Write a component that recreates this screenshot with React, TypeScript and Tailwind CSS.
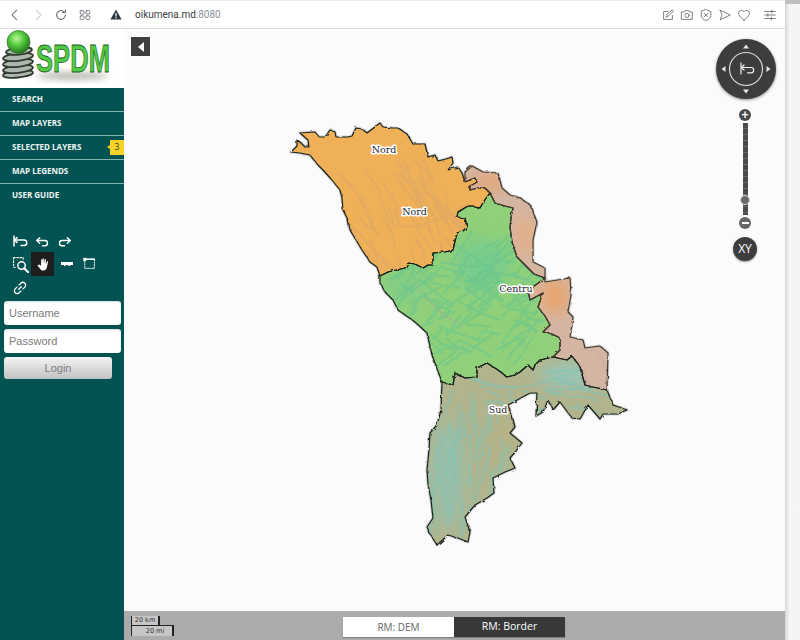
import React from "react";

const nordCentre = "380,276 388,272 405,268 408,263 415,264 423,268 428,265 433,265 433,253 445,252 453,250 455,241 457,233 463,231 467,227 465,218 457,217 458,212 468,206 474,206 480,208 484,201 490,193";
const centreEast = "490,193 495,203 505,206 513,208 511,218 510,227 512,242 517,257 522,262 530,270 534,274 545,278 537,284 528,290 530,300 543,293 538,307 545,316 550,325 543,332 552,334 560,338 560,350 553,357";
const centreSouth = "553,357 540,360 535,365 533,370 528,365 520,372 515,375 507,377 498,370 487,363 477,368 477,377 465,378 455,373 453,385 442,382";
const pts = (s: string) => s.trim().split(" ");
const rev = (s: string) => pts(s).reverse().join(" ");

const nord = `291,152 297,146 297,140 301,143 305,147 309,147 308,140 300,133 315,132 319,137 325,137 330,130 335,132 336,137 348,137 352,136 356,128 362,129 367,133 375,127 380,123 383,127 392,128 398,128 407,134 413,144 425,144 428,157 435,155 438,161 446,159 452,157 453,163 448,170 458,167 462,173 465,182 475,178 477,182 470,186 470,190 478,188 485,188 ${rev(nordCentre)} 377,267 370,262 362,250 350,230 348,220 343,210 342,198 340,190 332,180 323,170 318,165 310,155 300,153`;
const centre = `${nordCentre} ${pts(centreEast).slice(1).join(" ")} ${pts(centreSouth).slice(1).join(" ")} 432,355 427,333 415,322 398,310 393,300 385,292 380,283`;
const east = `465,172 472,166 483,172 498,173 502,188 510,195 520,198 530,205 537,222 533,240 533,262 545,268 545,282 570,278 571,295 568,312 573,317 570,337 583,340 585,348 600,346 608,353 607,390 593,387 585,385 580,367 572,356 567,360 553,357 ${rev(centreEast)} 485,188 478,188 470,190 470,186 477,182 475,178 465,182`;
const sud = `${rev(centreSouth)} 567,360 572,356 580,367 585,385 593,387 607,390 613,405 627,410 618,414 603,414 600,419 588,405 580,419 572,418 560,402 553,410 548,400 543,412 536,416 537,393 530,393 519,399 508,405 512,416 515,427 510,433 522,443 516,451 510,458 515,468 505,472 493,478 494,493 487,498 475,505 465,517 470,532 468,542 458,538 448,535 437,545 430,534 427,527 433,518 431,500 428,484 427,470 429,450 430,433 437,425 441,410`;

function makeStreams(seed: number, x0: number, y0: number, x1: number, y1: number, angle: number, n: number): string[] {
  let s = seed;
  const r = () => { s = (s * 16807) % 2147483647; return s / 2147483647; };
  const out: string[] = [];
  for (let i = 0; i < n; i++) {
    const x = x0 + r() * (x1 - x0);
    const y = y0 + r() * (y1 - y0);
    const a = angle + (r() - 0.5) * 0.6;
    const len = 14 + r() * 22;
    const mx = x + Math.cos(a) * len * 0.5 + (r() - 0.5) * 6;
    const my = y + Math.sin(a) * len * 0.5 + (r() - 0.5) * 6;
    const ex = x + Math.cos(a) * len;
    const ey = y + Math.sin(a) * len;
    out.push(`M${x.toFixed(1)} ${y.toFixed(1)}Q${mx.toFixed(1)} ${my.toFixed(1)} ${ex.toFixed(1)} ${ey.toFixed(1)}`);
  }
  return out;
}

const Region = ({ id, points, base, streams, streamColor, width = 2, opacity = 0.5, overlay }: { id: string; points: string; base: string; streams: string[]; streamColor: string; width?: number; opacity?: number; overlay?: React.ReactNode }) => (
  <g>
    <clipPath id={id}><polygon points={points} /></clipPath>
    <polygon points={points} fill={base} />
    <g clipPath={`url(#${id})`}>
      {overlay}
      <g filter="url(#soft)" stroke={streamColor} strokeWidth={width} fill="none" strokeLinecap="round" opacity={opacity}>
        {streams.map((d, i) => <path key={i} d={d} />)}
      </g>
    </g>
  </g>
);

const MoldovaMap = () => (
  <svg width="661" height="582" viewBox="124 29 661 582" className="block">
    <defs>
      <filter id="soft" x="-10%" y="-10%" width="120%" height="120%"><feGaussianBlur stdDeviation="0.7" /></filter>
      <filter id="blur6" x="-30%" y="-30%" width="160%" height="160%"><feGaussianBlur stdDeviation="8" /></filter>
      <filter id="rough" x="-5%" y="-5%" width="110%" height="110%">
        <feTurbulence type="fractalNoise" baseFrequency="0.2" numOctaves="2" seed="4" />
        <feDisplacementMap in="SourceGraphic" scale="3" />
      </filter>
    </defs>
    <g filter="url(#rough)">
      <g fill="none" stroke="#00000030" strokeWidth="3" strokeLinejoin="round">
        <polygon points={nord} /><polygon points={centre} /><polygon points={east} /><polygon points={sud} />
      </g>
      <Region id="rN" points={nord} base="#f0b059" streamColor="#d2a46c" opacity={0.4} streams={[
        ...makeStreams(77, 340, 160, 455, 255, 1.0, 60),
        "M470 202Q440 222 420 225T395 226", "M445 190Q452 210 436 222", "M400 170Q420 195 430 222", "M370 240Q375 252 378 262",
      ]} />
      <Region id="rC" points={centre} base="#90d07a" streamColor="#63c48f" width={2.2} opacity={0.5} overlay={<>
        <ellipse cx="482" cy="265" rx="26" ry="26" fill="#78cc8c" filter="url(#blur6)" />
        <ellipse cx="405" cy="288" rx="18" ry="14" fill="#80cc86" filter="url(#blur6)" />
        <g stroke="#a8a89c" strokeWidth="1.200" fill="none" filter="url(#soft)">
          <path d="M415 283L430 302 445 316 456 322" strokeDasharray="3 2" />
          <path d="M440 312L462 326" strokeDasharray="3 3" />
        </g>
      </>} streams={[
        ...makeStreams(31, 410, 225, 545, 350, 2.4, 90),
        ...makeStreams(91, 400, 260, 540, 345, 0.35, 40),
        "M455 245Q480 258 500 280T530 320", "M440 262Q475 270 500 262",
      ]} />
      <Region id="rE" points={east} base="#d4b5a3" streamColor="#c9ab98" overlay={<>
        <ellipse cx="490" cy="182" rx="20" ry="10" fill="#e3a77b" filter="url(#blur6)" />
        <ellipse cx="555" cy="296" rx="14" ry="18" fill="#e9a46a" filter="url(#blur6)" />
        <ellipse cx="525" cy="235" rx="8" ry="20" fill="#e6ae7f" filter="url(#blur6)" />
      </>} streams={makeStreams(13, 470, 170, 600, 380, 1.2, 8)} />
      <Region id="rS" points={sud} base="#b2b48d" streamColor="#80c4b6" width={2.2} opacity={0.55} overlay={<>
        <ellipse cx="448" cy="475" rx="16" ry="55" fill="#97c0aa" filter="url(#blur6)" />
        <ellipse cx="570" cy="375" rx="32" ry="12" fill="#98c6b8" filter="url(#blur6)" />
        <ellipse cx="500" cy="440" rx="9" ry="24" fill="#b9b284" filter="url(#blur6)" />
      </>} streams={[
        ...makeStreams(55, 430, 390, 510, 520, 1.6, 54),
        ...makeStreams(17, 470, 365, 610, 410, 0.2, 26),
        "M476 420Q480 470 476 510", "M470 375Q500 395 545 382T580 365", "M462 500Q465 525 462 540",
      ]} />
      <g fill="none" stroke="#18221a" strokeWidth="1.200" strokeLinejoin="round">
        <polygon points={nord} />
        <polygon points={centre} />
        <polygon points={east} stroke="#44392e" />
        <polygon points={sud} />
      </g>
    </g>
    <g fontFamily="'DejaVu Serif', serif" fontSize="9.5" fill="#26262e" textAnchor="middle" stroke="#ffffff" strokeWidth="3" strokeLinejoin="round" paintOrder="stroke">
      <text x="384" y="152.500">Nord</text>
      <text x="414.500" y="215">Nord</text>
      <text x="516" y="291.500">Centru</text>
      <text x="498" y="412.500">Sud</text>
    </g>
  </svg>
);

const Logo = () => (
  <div className="h-[59px] w-full bg-white">
    <svg width="124" height="59" viewBox="0 0 124 59" className="block">
      <defs>
        <radialGradient id="ball" cx="0.42" cy="0.35" r="0.7">
          <stop offset="0" stopColor="#b9f59a" />
          <stop offset="0.45" stopColor="#52c93c" />
          <stop offset="1" stopColor="#1d6b1a" />
        </radialGradient>
        <filter id="lg" x="-20%" y="-60%" width="140%" height="220%"><feGaussianBlur stdDeviation="3" /></filter>
      </defs>
      <ellipse cx="72" cy="47" rx="36" ry="4" fill="#bcbcb4" filter="url(#lg)" />
      <g fill="#aeb6ae" stroke="#2f3a2f" strokeWidth="1.800">
        <ellipse cx="18" cy="45" rx="15" ry="3.500" transform="rotate(-6 18 45)" />
        <ellipse cx="18" cy="40" rx="15" ry="3.800" transform="rotate(-6 18 40)" />
        <ellipse cx="18" cy="34" rx="15" ry="3.800" transform="rotate(-6 18 34)" />
        <ellipse cx="18" cy="28" rx="15" ry="3.800" transform="rotate(-6 18 28)" />
        <ellipse cx="19" cy="22" rx="13" ry="3.600" transform="rotate(-6 19 22)" />
      </g>
      <circle cx="18.500" cy="13" r="11.500" fill="url(#ball)" stroke="#2f6a2a" strokeWidth="0.6" />
      <text transform="translate(36 43) scale(0.674 1)" fontFamily="'Liberation Sans', sans-serif" fontSize="38" fontWeight="700" fill="#4fca42" stroke="#1d5c1d" strokeWidth="0.800">SPDM</text>
    </svg>
  </div>
);

const I = ({ children, size = 16, sw = 1.4, className = "" }: { children: React.ReactNode; size?: number; sw?: number; className?: string }) => (
  <svg width={size} height={size} viewBox="0 0 16 16" fill="none" stroke="currentColor" strokeWidth={sw} strokeLinecap="round" strokeLinejoin="round" className={className}>{children}</svg>
);

const BrowserBar = () => (
  <div className="flex h-[29px] w-full items-center border-b border-t border-b-[#d9dce0] border-t-[#ececec] bg-white text-[#6b6f75]">
    <div className="w-[8px]" />
    <I size={14} sw={1.200}><path d="M10 2.500 4.500 8l5.500 5.500" /></I>
    <div className="w-[9px]" />
    <I size={14} sw={1.200} className="text-[#c8cacd]"><path d="M6 2.500 11.500 8 6 13.500" /></I>
    <div className="w-[9px]" />
    <I size={14} sw={1.200}><path d="M13 8a5 5 0 1 1-1.600-3.700M13 2v3h-3" /></I>
    <div className="w-[10px]" />
    <I size={14} sw={1}><rect x="2.500" y="3" width="4.500" height="4" rx="1" /><rect x="9" y="3" width="4.500" height="4" rx="1" /><rect x="2.500" y="9" width="4.500" height="4" rx="1" /><rect x="9" y="9" width="4.500" height="4" rx="1" /></I>
    <div className="w-[18px]" />
    <svg width="12" height="11" viewBox="0 0 12 11"><path d="M6 .500 11.600 10.500H.400Z" fill="#2e3640" /><rect x="5.400" y="4" width="1.200" height="3.600" fill="#fff" /><rect x="5.400" y="8.200" width="1.200" height="1.200" fill="#fff" /></svg>
    <div className="ml-[13px] text-[10px] text-[#3b4045]" style={{ fontFamily: "'Roboto', sans-serif" }}>oikumena.md<span className="text-[#8a929c]">:8080</span></div>
    <div className="ml-auto mr-[8px] flex items-center gap-[5px]">
      <I size={14} sw={1}><path d="M13 8.500V13H3V4h5M6 10l1-3 6-5 1.500 1.500-6 5.500Z" /></I>
      <I size={14} sw={1}><path d="M2 4.500h3L6 3h4l1 1.500h3V13H2Z" /><circle cx="8" cy="8.500" r="2.400" /></I>
      <I size={14} sw={1}><path d="M8 1.800 13.500 4v4.500c0 3-2.600 4.800-5.500 5.800-2.900-1-5.500-2.800-5.500-5.800V4Z" /><path d="M6 6.200 10 10M10 6.200 6 10" /></I>
      <I size={14} sw={1}><path d="M2.500 2.500 14 8 2.500 13.500 4.500 8Z" /></I>
      <I size={14} sw={1}><path d="M8 13.800S1.800 10 1.800 5.800A3.300 3.300 0 0 1 8 4.300a3.300 3.300 0 0 1 6.200 1.500C14.200 10 8 13.800 8 13.800Z" /></I>
      <div className="w-[2px]" />
      <I size={14} sw={1}><path d="M2 4h12M2 8h12M2 12h12" /><path d="M10 2.500v3M5.500 6.500v3M9.500 10.500v3" /></I>
    </div>
  </div>
);

const menu = ["SEARCH", "MAP LAYERS", "SELECTED LAYERS", "MAP LEGENDS", "USER GUIDE"];

const Sidebar = () => (
  <aside className="flex h-full w-[124px] shrink-0 flex-col bg-white">
    <Logo />
    <div className="flex min-h-0 flex-1 flex-col bg-[#045353]">
      <nav className="flex flex-col">
        {menu.map((m, i) => (
          <div key={m} className={`relative flex h-[24px] items-center border-b pb-[2px] pl-[12px] text-[8px] font-bold text-[#eef5f4] ${i < 4 ? "border-[#7fb3ad]" : "border-transparent"}`} style={{ fontFamily: "'Open Sans', sans-serif" }}>
            {m}
            {i === 2 && (
              <span className="absolute right-0 top-[4px] flex h-[15px] w-[14px] items-center justify-center bg-[#f7d328] text-[8.500px] font-normal text-[#333]">
                3
                <span className="absolute left-[-3px] top-[5px] h-0 w-0 border-y-[2.500px] border-r-[3px] border-y-transparent border-r-[#f7d328]" />
              </span>
            )}
          </div>
        ))}
      </nav>
      <div className="mt-[22px] flex flex-col text-white">
        <div className="flex h-[22px] items-center gap-[7px] pl-[12px]">
          <I size={16} sw={1.500}><path d="M2 3v10" /><path d="M2.500 7H12a2.800 2.800 0 0 1 0 5.600H9" /><path d="M5 4.500 2.500 7 5 9.500" /></I>
          <I size={15} sw={1.500}><path d="M5 4 2 7l3 3" /><path d="M2 7h8.500a2.800 2.800 0 0 1 0 5.600H8" /></I>
          <I size={15} sw={1.500}><path d="M11 4l3 3-3 3" /><path d="M14 7H5.500a2.800 2.800 0 0 0 0 5.600H8" /></I>
        </div>
        <div className="flex h-[24px] items-center pl-[12px]">
          <div className="h-[17px] w-[19px]">
            <I size={17} sw={1.400}><path d="M1.500 1.500h9M1.500 1.500v9M10.500 1.500v3M1.500 10.500h3" strokeDasharray="1.500 1.500" strokeWidth="1" /><circle cx="9" cy="9" r="3.500" /><path d="m11.500 11.500 3.500 3.500" strokeWidth="2" /></I>
          </div>
          <div className="flex h-[24px] w-[23px] items-center justify-center bg-[#1e1e1e]">
            <svg width="15" height="15" viewBox="0 0 16 16" fill="#fff"><path d="M3.500 8.500 5 8l1.500 1.500V3.200c0-1 1.300-1 1.300 0V7l.2-5c0-1 1.400-1 1.400 0l.1 5 .8-4.200c.2-1 1.500-.8 1.400.2L11.500 8l1.200-3c.4-.9 1.500-.5 1.200.5l-1.400 6c-.4 1.800-1.600 3-3.500 3-2.200 0-3-1-4-2.500L3 9.500c-.4-.6 0-1 .5-1Z" /></svg>
          </div>
          <div className="ml-[7px] h-[4px] w-[12px] border-b border-dashed border-[#4a4a4a] bg-white" />
          <div className="ml-[10px]">
            <I size={14} sw={1}><rect x="2" y="2.500" width="11" height="10.500" strokeDasharray="1.500 1.300" /><path d="M2 2.500h11" strokeWidth="1.800" /><rect x="1" y="1.500" width="2.500" height="2.500" fill="#fff" /></I>
          </div>
        </div>
        <div className="flex h-[24px] items-center pl-[13px]">
          <I size={14} sw={1.500}><path d="M6.500 9.500 9.500 6.500" /><path d="M7 4.500 9 2.500a3 3 0 0 1 4.500 4.500l-2 2" /><path d="M9 11.500 7 13.500a3 3 0 0 1-4.500-4.500l2-2" /></I>
        </div>
      </div>
      <div className="ml-[4px] mt-px flex w-[117px] flex-col gap-[4px]" style={{ fontFamily: "'Liberation Sans', sans-serif" }}>
        <input readOnly placeholder="Username" className="h-[24px] w-full rounded-[3px] bg-white px-[5px] text-[11px] text-[#777] shadow-[inset_0_1px_2px_rgba(0,0,0,0.15)] outline-none placeholder:text-[#7a7a7a]" />
        <input readOnly placeholder="Password" className="h-[24px] w-full rounded-[3px] bg-white px-[5px] text-[11px] text-[#777] shadow-[inset_0_1px_2px_rgba(0,0,0,0.15)] outline-none placeholder:text-[#7a7a7a]" />
        <button className="h-[22px] w-[108px] rounded-[3px] bg-gradient-to-b from-[#f4f4f4] to-[#c2c2c2] text-[11px] text-[#7d7d7d]">Login</button>
      </div>
    </div>
  </aside>
);

const Compass = () => (
  <div className="absolute right-[9px] top-[10px] h-[60px] w-[60px] rounded-full bg-[#3d3d3d] shadow-[0_1px_3px_rgba(0,0,0,0.45)]">
    <svg width="60" height="60" viewBox="0 0 60 60" className="block">
      <circle cx="30" cy="30" r="16.500" fill="none" stroke="#d8d8d8" strokeWidth="1.200" />
      <path d="M30 5.500 33 9.500H27ZM30 54.500 33 50.500H27ZM5.500 30 9.500 27V33ZM54.500 30 50.500 27V33Z" fill="#e6e6e6" />
      <g fill="none" stroke="#f0f0f0" strokeWidth="1.200" strokeLinejoin="round" strokeLinecap="round">
        <path d="M25 24v11" />
        <path d="M25.500 28.500H35a2.700 2.700 0 0 1 0 5.400h-3.500" />
        <path d="M28 26 25.500 28.500 28 31" />
      </g>
    </svg>
  </div>
);

const Zoom = () => (
  <div className="absolute right-[34px] top-[80px] flex w-[12px] flex-col items-center">
    <div className="flex h-[12px] w-[12px] items-center justify-center rounded-full bg-[#4a4a4a] text-[12px] font-bold leading-none text-white" style={{ fontFamily: "'Liberation Sans', sans-serif" }}>+</div>
    <div className="relative mt-[2px] h-[92px] w-[5px] bg-[repeating-linear-gradient(to_bottom,#4a4a4a_0,#4a4a4a_5px,#6b6b6b_5px,#6b6b6b_6px)]">
      <div className="absolute left-[-3px] top-[72px] h-[10px] w-[10px] rounded-full border border-[#d8d8d8] bg-[#6a6a6a]" />
    </div>
    <div className="mt-[2px] flex h-[12px] w-[12px] items-center justify-center rounded-full bg-[#666]"><div className="h-[2px] w-[7px] bg-white" /></div>
    <div className="mt-[8px] flex h-[24px] w-[24px] shrink-0 items-center justify-center rounded-full bg-[#3d3d3d] text-[12px] text-white shadow-[0_1px_2px_rgba(0,0,0,0.4)]" style={{ fontFamily: "'Open Sans', sans-serif" }}>XY</div>
  </div>
);

const BottomBar = () => (
  <div className="relative flex h-[29px] shrink-0 items-start justify-center bg-[#ababab]" style={{ fontFamily: "'Open Sans', sans-serif" }}>
    <div className="absolute left-[7px] top-[5px] text-[6.500px] leading-none text-[#333]" style={{ fontFamily: "'DejaVu Sans', sans-serif" }}>
      <div className="flex h-[9px] w-[29px] items-center justify-center border-l border-r-2 border-[#222] bg-[#c6c6c6]">20 km</div>
      <div className="flex h-[11px] w-[43px] items-center justify-center border-l border-r-2 border-t border-[#222] bg-[#c6c6c6] pl-[6px]">20 mi</div>
    </div>
    <div className="ml-[-1px] mt-[6px] flex h-[20px] shadow-[0_1px_1px_rgba(0,0,0,0.25)]">
      <div className="flex w-[111px] items-center justify-center bg-white text-[10px] text-[#666]">RM: DEM</div>
      <div className="flex w-[111px] items-center justify-center bg-[#383838] text-[10.500px] text-white">RM: Border</div>
    </div>
  </div>
);

export default function App() {
  return (
    <div className="flex h-[640px] w-[800px] overflow-hidden bg-[#f3f3f3]">
      <div className="flex h-full w-[785px] shrink-0 flex-col">
        <BrowserBar />
        <div className="flex min-h-0 flex-1">
          <Sidebar />
          <main className="flex min-w-0 flex-1 flex-col bg-[#fbfbfb]">
            <div className="relative min-h-0 flex-1 overflow-hidden">
              <MoldovaMap />
              <div className="absolute left-[7px] top-[8px] flex h-[19px] w-[19px] items-center justify-center bg-[#3f3f41]">
                <div className="h-0 w-0 border-y-[5px] border-r-[6px] border-y-transparent border-r-white" />
              </div>
              <Compass />
              <Zoom />
            </div>
            <BottomBar />
          </main>
        </div>
      </div>
      <div className="flex h-full w-[15px] shrink-0 flex-col">
        <div className="h-[4px] bg-[#bdbdbd]" />
        <div className="flex-1 bg-gradient-to-r from-[#d6d6d6] to-[#f5f5f5] to-30%" />
      </div>
    </div>
  );
}
